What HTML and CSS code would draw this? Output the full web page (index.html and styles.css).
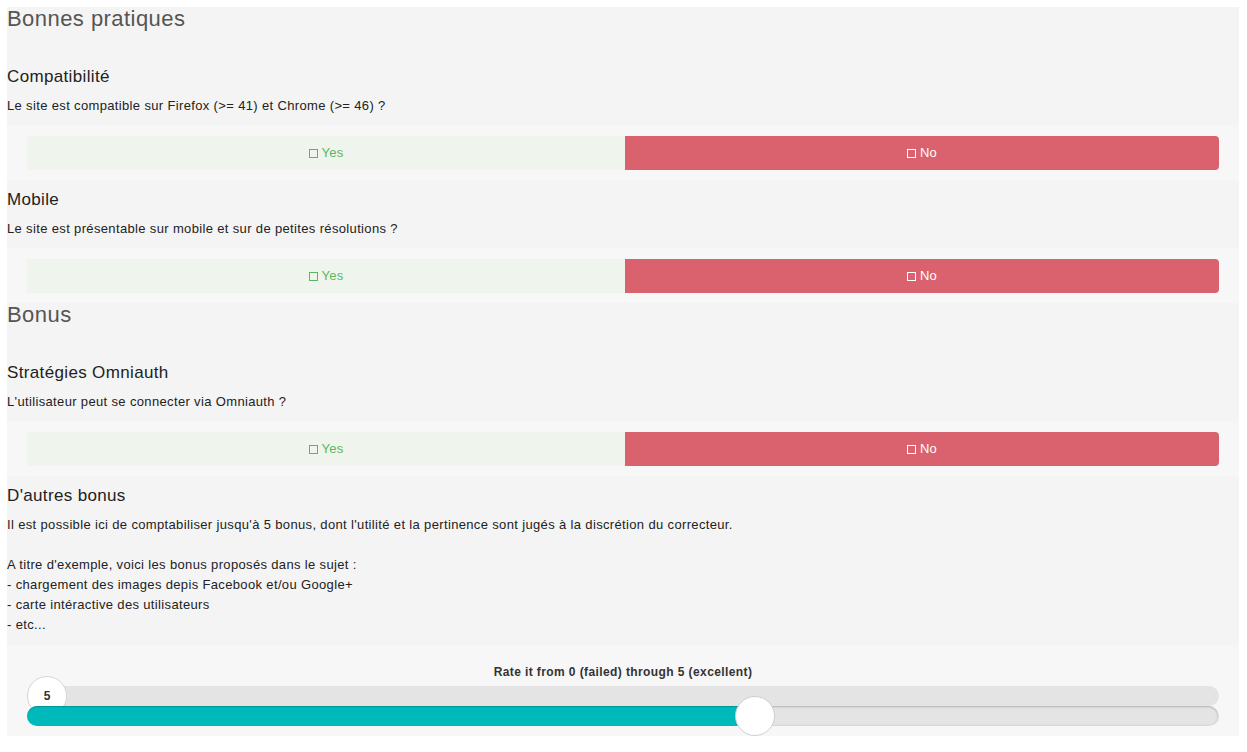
FILE: index.html
```html
<!DOCTYPE html>
<html lang="fr">
<head>
<meta charset="utf-8">
<title>Bonnes pratiques</title>
<link rel="stylesheet" href="styles.css">
</head>
<body>
<div class="page">
  <h2 class="section-title">Bonnes pratiques</h2>

  <div class="question">
    <h4 class="q-title">Compatibilité</h4>
    <p class="q-text">Le site est compatible sur Firefox (&gt;= 41) et Chrome (&gt;= 46) ?</p>
  </div>
  <div class="choice-row">
    <div class="btn btn-yes"><span class="box"></span>Yes</div>
    <div class="btn btn-no"><span class="box"></span>No</div>
  </div>

  <div class="question">
    <h4 class="q-title">Mobile</h4>
    <p class="q-text">Le site est présentable sur mobile et sur de petites résolutions ?</p>
  </div>
  <div class="choice-row">
    <div class="btn btn-yes"><span class="box"></span>Yes</div>
    <div class="btn btn-no"><span class="box"></span>No</div>
  </div>

  <h2 class="section-title section-title-next">Bonus</h2>

  <div class="question">
    <h4 class="q-title">Stratégies Omniauth</h4>
    <p class="q-text">L'utilisateur peut se connecter via Omniauth ?</p>
  </div>
  <div class="choice-row">
    <div class="btn btn-yes"><span class="box"></span>Yes</div>
    <div class="btn btn-no"><span class="box"></span>No</div>
  </div>

  <div class="question">
    <h4 class="q-title">D'autres bonus</h4>
    <p class="q-text">Il est possible ici de comptabiliser jusqu'à 5 bonus, dont l'utilité et la pertinence sont jugés à la discrétion du correcteur.<br><br>A titre d'exemple, voici les bonus proposés dans le sujet :<br>- chargement des images depis Facebook et/ou Google+<br>- carte intéractive des utilisateurs<br>- etc...</p>
  </div>

  <div class="rating">
    <div class="rating-label">Rate it from 0 (failed) through 5 (excellent)</div>
    <div class="slider">
      <div class="track track-top"></div>
      <div class="bubble">5</div>
      <div class="track track-main">
        <div class="fill" style="width: 728px"></div>
      </div>
      <div class="handle" style="left: 708px"></div>
    </div>
  </div>
</div>
</body>
</html>
```

FILE: styles.css
```css
* { box-sizing: border-box; }

html, body {
  margin: 0;
  padding: 0;
  background: #ffffff;
}

body {
  font-family: "Liberation Sans", Arial, Helvetica, sans-serif;
  color: #222;
}

.page {
  margin: 7px 8px 0 7px;
  background: #f4f4f4;
}

.section-title {
  margin: 0 0 36px 0;
  font-size: 22px;
  line-height: 24px;
  font-weight: normal;
  color: #555;
  letter-spacing: 0.45px;
}

.section-title-next {
  margin-top: 0;
}

.section-title + .question .q-title {
  margin-top: 0;
}

.q-title {
  margin: 10px 0 0 0;
  font-size: 17px;
  line-height: 20px;
  font-weight: normal;
  color: #222;
  letter-spacing: 0.35px;
}

.q-text {
  margin: 9px 0 0 0;
  font-size: 13px;
  line-height: 20px;
  color: #222;
  letter-spacing: 0.35px;
}

.choice-row {
  margin-top: 9px;
  padding: 11px 20px 10px 20px;
  background: #f7f7f7;
  display: flex;
}

.btn {
  flex: 1 1 0;
  height: 34px;
  display: flex;
  align-items: center;
  justify-content: center;
  font-size: 13px;
  line-height: 18px;
  letter-spacing: 0.2px;
}

.btn-yes {
  flex-grow: 598;
  background: #eff4ed;
  color: #5cb85c;
}

.btn-no {
  flex-grow: 594;
  background: #d9626e;
  color: #ffffff;
  border-radius: 0 4px 4px 0;
}

.box {
  display: inline-block;
  width: 9px;
  height: 9px;
  border: 1px solid currentColor;
  margin-right: 4px;
  margin-top: 1px;
}

.rating {
  margin-top: 10px;
  background: #f7f7f7;
  padding: 19px 20px 10px 20px;
}

.rating-label {
  text-align: center;
  font-size: 12px;
  line-height: 16px;
  font-weight: bold;
  color: #333;
  letter-spacing: 0.4px;
}

.slider {
  position: relative;
  margin-top: 6px;
}

.track {
  height: 20px;
  border-radius: 10px;
  background: #e4e4e4;
}

.track-main {
  position: relative;
  z-index: 2;
  box-shadow: inset 0 1px 2px rgba(0, 0, 0, 0.22);
  border: 1px solid #d8d8d8;
  border-top: none;
}

.fill {
  position: absolute;
  left: -1px;
  top: 0;
  bottom: -1px;
  background: #00b9bb;
  border-radius: 10px 0 0 10px;
  box-shadow: inset 0 1px 1px rgba(0, 0, 0, 0.2);
  z-index: 2;
}

.bubble {
  position: absolute;
  left: 0;
  top: -10px;
  width: 40px;
  height: 40px;
  border-radius: 50%;
  background: #ffffff;
  border: 1px solid #d6d6d6;
  font-size: 12px;
  font-weight: bold;
  color: #333;
  display: flex;
  align-items: center;
  justify-content: center;
  z-index: 1;
}

.handle {
  position: absolute;
  top: 10px;
  width: 40px;
  height: 40px;
  border-radius: 50%;
  background: #ffffff;
  border: 1px solid #cfcfcf;
  z-index: 3;
}
```
